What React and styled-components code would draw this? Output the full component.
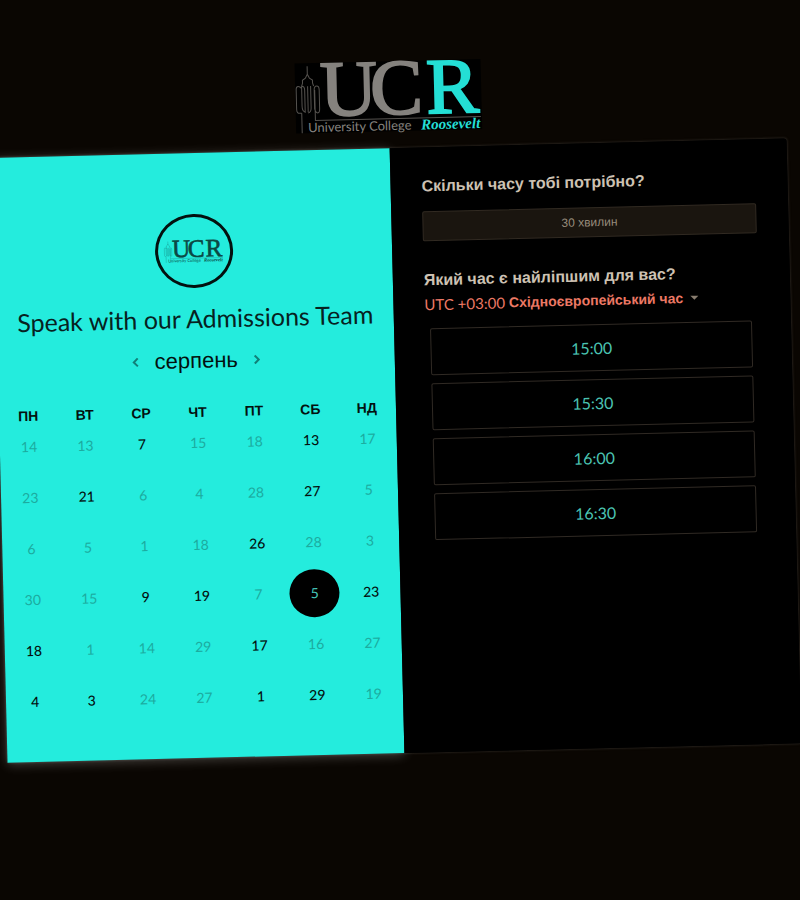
import React, { useState } from "react";
import styled, { createGlobalStyle, css } from "styled-components";

const sans = '"Liberation Sans", Arial, sans-serif';
const human = 'Lato, "Liberation Sans", sans-serif';

const GlobalStyle = createGlobalStyle`
  *, *::before, *::after { box-sizing: border-box; }
  body { margin: 0; background: #0a0602; }
  button { font: inherit; color: inherit; padding: 0; border: 0; background: none; cursor: pointer; }
  h1, h2, p { margin: 0; }
`;

const Viewport = styled.div`
  min-height: 100vh;
  overflow: hidden;
  display: grid;
`;

const TiltedPage = styled.div`
  padding: 61px 6px 0 0;
  transform: rotate(-1.4deg);
  font-family: ${sans};
`;

const Header = styled.header`
  display: flex;
  justify-content: center;
  margin-bottom: 17px;
`;

const LogoSvg = styled.svg`
  display: block;
  width: ${(p) => p.$width}px;
  overflow: visible;
  background: ${(p) => p.$background};
`;

const Card = styled.main`
  display: grid;
  grid-template-columns: 1fr 1fr;
  background: #000;
  border-radius: 3px;
  box-shadow: 0 0 2px 1px #25201b;
`;

const CalendarPanel = styled.section`
  display: flex;
  flex-direction: column;
  align-items: center;
  padding: 61px 0 35px;
  background: #24ecdd;
  color: #07221f;
  box-shadow: 0 2px 12px rgba(255, 255, 255, 0.24);
`;

const Avatar = styled.div`
  display: flex;
  align-items: center;
  justify-content: center;
  width: 78px;
  height: 74px;
  border: 3px solid #03110f;
  border-radius: 50%;
`;

const Title = styled.h1`
  margin-top: 15px;
  font: 400 25px/30px ${human};
  white-space: nowrap;
`;

const MonthBar = styled.div`
  display: flex;
  align-items: center;
  gap: 14px;
  margin-top: 14px;
`;

const MonthName = styled.h2`
  font: 400 22px/28px ${sans};
  color: #03110f;
`;

const MonthButton = styled.button`
  display: grid;
  place-items: center;
  width: 10px;
  height: 20px;
  color: #118078;
`;

const Calendar = styled.table`
  width: calc(100% - 2px);
  margin-top: 32px;
  table-layout: fixed;
  border-collapse: collapse;
`;

const Weekday = styled.th`
  padding: 0;
  font: 700 14px/10px ${sans};
  color: #03110f;
`;

const DayCell = styled.td`
  height: 51px;
  padding: 0;
`;

const Day = styled.button`
  display: block;
  width: 50px;
  height: 48px;
  margin: 0 auto;
  border-radius: 50%;
  font: 500 14px/20px ${human};
  color: #03110f;

  &:disabled {
    color: #1cab9f;
    font-weight: 400;
    cursor: default;
  }

  ${(p) =>
    p.$selected &&
    css`
      background: #000;
      color: #45c5b8;
      font-weight: 400;
    `}
`;

const BookingPanel = styled.section`
  position: relative;
  padding: 29px 32px 0 31px;
  border-radius: 0 3px 3px 0;
  background: #000;
`;

const Question = styled.h2`
  font: 700 16px/20px ${sans};
  color: #cdc2b3;
`;

const Duration = styled.button`
  display: block;
  width: 100%;
  height: 30px;
  margin: 15px 0 29px;
  border: 1px solid #312a22;
  border-radius: 2px;
  background: #1a150f;
  color: #978b7b;
  font: 400 12px/20px ${sans};
`;

const Timezone = styled.button`
  display: flex;
  align-items: center;
  gap: 4px;
  margin-top: 4px;
  color: #ed7965;
  font: 400 15px/20px ${human};
`;

const ZoneName = styled.span`
  font: 700 14px/20px ${sans};
`;

const Caret = styled.span`
  margin-left: 3px;
  border: 4px solid transparent;
  border-top-color: #887c6e;
  border-bottom: 0;
`;

const Slots = styled.div`
  display: grid;
  gap: 8px;
  margin: 14px 7px 0 5px;
`;

const Slot = styled.button`
  height: 47px;
  border: 1px solid #302a24;
  border-radius: 2px;
  color: #4bc4b3;
  font: 400 16px/20px ${human};
`;

function Logo({ width, ink, accent, muted, background }) {
  return (
    <LogoSvg
      viewBox="0 0 186 70"
      $width={width}
      $background={background}
      role="img"
      aria-label="University College Roosevelt"
    >
      <g fill="none" stroke={muted} strokeWidth="1">
        <path d="M12.5 3v9M12.5 11l-2 4-3 2v3l-1 3M12.5 11l2 4 3 2v3l1 3" />
        <path d="M6.500 23v20q0 5 3 6v-22q0-4-3-4M12.500 49v-26M6 25q-1-2-3-2t-2 3v20q0 4 3 4h2M15.500 23v22q0 4-3 5M19 27q0-4 2.500-4t2.500 4v19q0 4-2 4t-3-4zM6 50v20M19.500 27v30.500H185" />
      </g>
      <g fontFamily="Liberation Serif, serif" fontSize="79" strokeWidth="2">
        <text x="25" y="53" fill={ink} stroke={ink}>U</text>
        <text x="75" y="53" fill={ink} stroke={ink}>C</text>
        <text x="131" y="53" fill={accent} stroke={accent}>R</text>
      </g>
      <text x="12" y="69" fill={ink} fontFamily="Lato, sans-serif" fontSize="13">
        University College
      </text>
      <text
        x="125"
        y="69"
        fill={accent}
        fontFamily="Liberation Serif, serif"
        fontSize="15"
        fontStyle="italic"
        fontWeight="700"
      >
        Roosevelt
      </text>
    </LogoSvg>
  );
}

function Chevron({ d }) {
  return (
    <svg width="8" height="10" viewBox="0 0 8 10" fill="none" stroke="currentColor" strokeWidth="2" aria-hidden="true">
      <path d={d} />
    </svg>
  );
}

const weekdays = ["ПН", "ВТ", "СР", "ЧТ", "ПТ", "СБ", "НД"];

const weeks = [
  [[14], [13], [7, true], [15], [18], [13, true], [17]],
  [[23], [21, true], [6], [4], [28], [27, true], [5]],
  [[6], [5], [1], [18], [26, true], [28], [3]],
  [[30], [15], [9, true], [19, true], [7], [5, true], [23, true]],
  [[18, true], [1], [14], [29], [17, true], [16], [27]],
  [[4, true], [3, true], [24], [27], [1, true], [29, true], [19]],
];

const times = ["15:00", "15:30", "16:00", "16:30"];

export default function App() {
  const [selected, setSelected] = useState("3-5");

  return (
    <Viewport>
      <GlobalStyle />
      <TiltedPage>
        <Header>
          <Logo width={186} ink="#85827e" accent="#24dfd5" muted="#56534f" background="#000" />
        </Header>
        <Card>
          <CalendarPanel>
            <Avatar>
              <Logo width={59} ink="#0b4743" accent="#0b4743" muted="#137f77" background="none" />
            </Avatar>
            <Title>Speak with our Admissions Team</Title>
            <MonthBar>
              <MonthButton aria-label="Попередній місяць">
                <Chevron d="M6 1 2 5l4 4" />
              </MonthButton>
              <MonthName>серпень</MonthName>
              <MonthButton aria-label="Наступний місяць">
                <Chevron d="M2 1l4 4-4 4" />
              </MonthButton>
            </MonthBar>
            <Calendar>
              <thead>
                <tr>
                  {weekdays.map((name) => (
                    <Weekday key={name} scope="col">{name}</Weekday>
                  ))}
                </tr>
              </thead>
              <tbody>
                {weeks.map((week, row) => (
                  <tr key={row}>
                    {week.map(([day, open], col) => {
                      const id = `${row}-${col}`;
                      return (
                        <DayCell key={id}>
                          <Day
                            disabled={!open}
                            $selected={selected === id}
                            aria-pressed={selected === id}
                            onClick={() => setSelected(id)}
                          >
                            {day}
                          </Day>
                        </DayCell>
                      );
                    })}
                  </tr>
                ))}
              </tbody>
            </Calendar>
          </CalendarPanel>
          <BookingPanel>
            <Question>Скільки часу тобі потрібно?</Question>
            <Duration>30 хвилин</Duration>
            <Question>Який час є найліпшим для вас?</Question>
            <Timezone aria-haspopup="listbox">
              UTC +03:00 <ZoneName>Східноєвропейський час</ZoneName>
              <Caret />
            </Timezone>
            <Slots>
              {times.map((time) => (
                <Slot key={time}>{time}</Slot>
              ))}
            </Slots>
          </BookingPanel>
        </Card>
      </TiltedPage>
    </Viewport>
  );
}
